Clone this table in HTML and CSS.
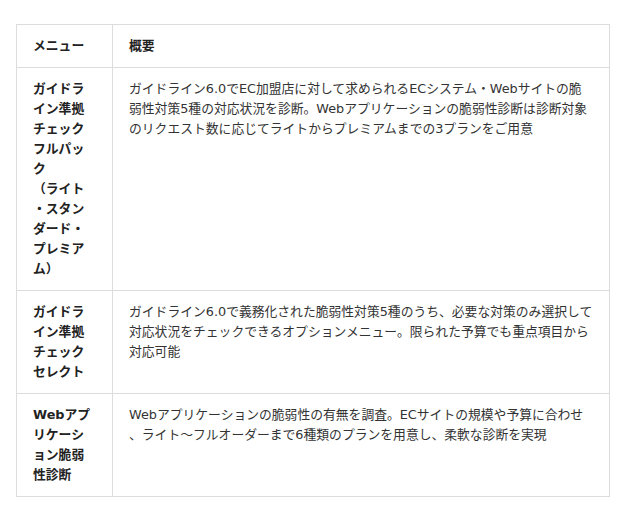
FILE: index.html
```html
<!DOCTYPE html>
<html lang="ja">
  <head>
    <meta charset="UTF-8" />
    <meta name="viewport" content="width=device-width, initial-scale=1.0" />
    <title>診断メニュー一覧</title>
    <link rel="stylesheet" href="styles.css">
  </head>
  <body>
    <div class="wrap">
      <table class="menu-table">
        <colgroup>
          <col class="col-menu" />
          <col class="col-desc" />
        </colgroup>
        <thead>
          <tr>
            <th>メニュー</th>
            <th>概要</th>
          </tr>
        </thead>
        <tbody>
          <tr>
            <th>ガイドライン準拠チェックフルパック<br />（ライト・スタンダード・プレミアム）</th>
            <td>ガイドライン6.0でEC加盟店に対して求められるECシステム・Webサイトの脆弱性対策5種の対応状況を診断。Webアプリケーションの脆弱性診断は診断対象のリクエスト数に応じてライトからプレミアムまでの3プランをご用意</td>
          </tr>
          <tr>
            <th>ガイドライン準拠チェックセレクト</th>
            <td>ガイドライン6.0で義務化された脆弱性対策5種のうち、必要な対策のみ選択して対応状況をチェックできるオプションメニュー。限られた予算でも重点項目から対応可能</td>
          </tr>
          <tr>
            <th>Webアプリケーション脆弱性診断</th>
            <td>Webアプリケーションの脆弱性の有無を調査。ECサイトの規模や予算に合わせ、ライト～フルオーダーまで6種類のプランを用意し、柔軟な診断を実現</td>
          </tr>
        </tbody>
      </table>
    </div>
  </body>
</html>
```

FILE: styles.css
```css
* {
  margin: 0;
  padding: 0;
  box-sizing: border-box;
}

body {
  background-color: #fff;
  color: #333;
  font-family: "DejaVu Sans", "Noto Sans CJK JP", sans-serif;
  font-size: 12.8px;
  line-height: 20px;
}

.wrap {
  padding: 24px 16px;
}

.menu-table {
  width: 594px;
  table-layout: fixed;
  border-collapse: collapse;
}

.col-menu {
  width: 96px;
}

.menu-table th,
.menu-table td {
  padding: 11px 16px;
  border: 1px solid #dcdcdc;
  text-align: left;
  vertical-align: top;
  line-break: anywhere;
}

.menu-table th {
  font-weight: bold;
  color: #222;
}

.menu-table td {
  color: #333;
}
```
